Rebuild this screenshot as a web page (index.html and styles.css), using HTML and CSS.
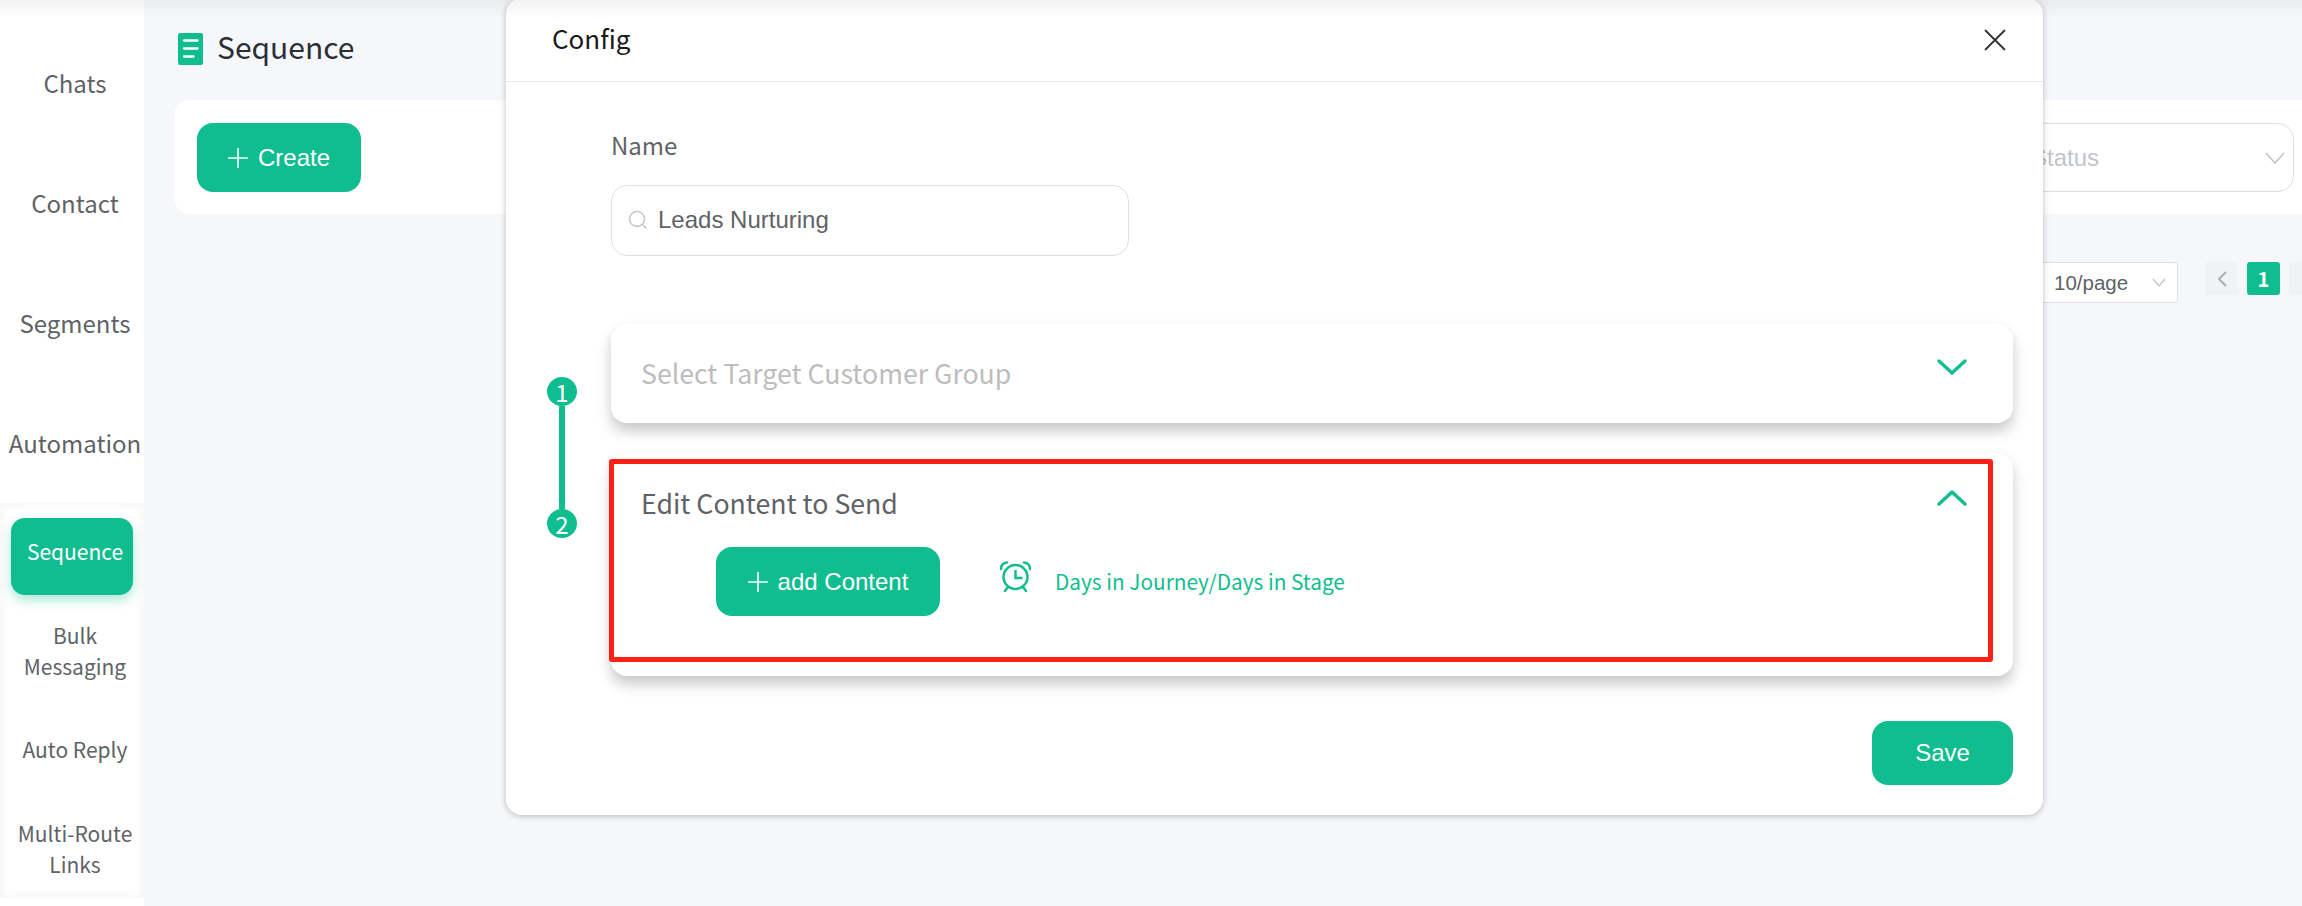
FILE: index.html
```html
<!DOCTYPE html>
<html>
<head>
	<meta charset="utf-8" />
	<title>Sequence</title>
	<link rel="stylesheet" href="styles.css">
</head>
<body>
	<div class="top_shade"></div>

	<div class="page">
		<div class="sidebar">
			<div class="nav_top">
				<div class="nav_big">Chats</div>
				<div class="nav_big">Contact</div>
				<div class="nav_big">Segments</div>
				<div class="nav_big">Automation</div>
			</div>
			<div class="nav_sub">
				<div class="nav_small active">Sequence</div>
				<div class="nav_small">Bulk Messaging</div>
				<div class="nav_small">Auto Reply</div>
				<div class="nav_small">Multi-Route Links</div>
			</div>
		</div>

		<div class="main">
			<div class="title_row">
				<svg class="title_icon" width="25" height="32" viewBox="0 0 25 32">
					<rect width="25" height="32" rx="2" fill="#10bd8f"/>
					<path d="M6 7.500h13.500M6 15.500h13.500M6 23.500h9.500" stroke="#fff" stroke-width="2.300" stroke-linecap="round" fill="none"/>
				</svg>
				<span class="title_text">Sequence</span>
			</div>

			<div class="filter_card">
				<button class="green_btn create_btn">
					<svg width="20" height="20" viewBox="0 0 20 20"><path d="M10 0v20M0 10h20" stroke="#fff" stroke-width="1.600" fill="none"/></svg>
					Create
				</button>
				<div class="status_select">
					<span>Status</span>
					<svg width="27" height="14" viewBox="0 0 27 14"><path d="M5 2l9 10 9-10" stroke="#c0c4cc" stroke-width="1.600" fill="none"/></svg>
				</div>
			</div>

			<div class="pager">
				<div class="page_size">
					<span>10/page</span>
					<svg width="14" height="9" viewBox="0 0 14 9"><path d="M1 1l6 7 6-7" stroke="#c0c4cc" stroke-width="1.300" fill="none"/></svg>
				</div>
				<div class="page_btn">
					<svg width="12" height="16" viewBox="0 0 12 16"><path d="M10 1L3 8l7 7" stroke="#a8abb2" stroke-width="1.800" fill="none"/></svg>
				</div>
				<div class="page_btn current">1</div>
				<div class="page_btn"></div>
			</div>
		</div>
	</div>

	<div class="modal">
		<div class="modal_head">
			<span class="modal_title">Config</span>
			<svg width="22" height="22" viewBox="0 0 22 22"><path d="M1 1l20 20M21 1L1 21" stroke="#303133" stroke-width="1.800" fill="none"/></svg>
		</div>
		<div class="modal_body">
			<div class="name_field">
				<div class="field_label">Name</div>
				<div class="name_input">
					<svg width="20" height="20" viewBox="0 0 20 20"><circle cx="9" cy="9" r="7.500" stroke="#c0c4cc" stroke-width="1.400" fill="none"/><path d="M14.500 14.500l4 4" stroke="#c0c4cc" stroke-width="1.400" fill="none"/></svg>
					<span>Leads Nurturing</span>
				</div>
			</div>

			<div class="steps">
				<div class="step_rail">
					<div class="step_dot">1</div>
					<div class="step_line"></div>
					<div class="step_dot">2</div>
				</div>
				<div class="step_cards">
					<div class="step_card closed">
						<div class="card_head">
							<span class="card_title muted">Select Target Customer Group</span>
							<svg width="30" height="16" viewBox="0 0 30 16"><path d="M2 2l13 12L28 2" stroke="#10bd8f" stroke-width="3.400" stroke-linecap="round" stroke-linejoin="round" fill="none"/></svg>
						</div>
					</div>
					<div class="step_card open">
						<div class="card_head">
							<span class="card_title">Edit Content to Send</span>
							<svg class="chevron_up" width="30" height="16" viewBox="0 0 30 16"><path d="M2 14L15 2l13 12" stroke="#10bd8f" stroke-width="3.400" stroke-linecap="round" stroke-linejoin="round" fill="none"/></svg>
						</div>
						<div class="content_row">
							<button class="green_btn add_btn">
								<svg width="20" height="20" viewBox="0 0 20 20"><path d="M10 0v20M0 10h20" stroke="#fff" stroke-width="1.600" fill="none"/></svg>
								add Content
							</button>
							<svg class="alarm" width="33" height="31" viewBox="0 0 33 31">
								<circle cx="16.500" cy="16" r="12" stroke="#10bd8f" stroke-width="2.500" fill="none"/>
								<path d="M16.500 9v8h7" stroke="#10bd8f" stroke-width="2.500" fill="none"/>
								<path d="M2 8C2 4 4 2 8 1.500M31 8c0-4-2-6-6-6.500M9 26l-3 4M24 26l3 4" stroke="#10bd8f" stroke-width="2.500" stroke-linecap="round" fill="none"/>
							</svg>
							<span class="days_text">Days in Journey/Days in Stage</span>
						</div>
						<div class="red_mark"></div>
					</div>
				</div>
			</div>

			<div class="modal_foot">
				<button class="green_btn save_btn">Save</button>
			</div>
		</div>
	</div>
</body>
</html>
```

FILE: styles.css
```css
*
{
	box-sizing:border-box;
}
html,body
{
	margin:0;
	height:100%;
	overflow:hidden;
}
body
{
	background-color:#f5f7fb;
	font-family:"Noto Sans CJK SC","Noto Sans",sans-serif;
	color:#606266;
}
.top_shade
{
	position:absolute;
	top:0;
	left:0;
	right:0;
	height:18px;
	z-index:5;
	background:linear-gradient(rgba(0,0,0,0.05),rgba(0,0,0,0));
}
.page
{
	display:flex;
	height:906px;
}

/* sidebar */
.sidebar
{
	width:144px;
	flex:none;
	background-color:#fff;
}
.nav_top
{
	padding-top:23px;
	height:503px;
}
.nav_big
{
	height:120px;
	width:150px;
	display:flex;
	align-items:center;
	justify-content:center;
	font-size:24px;
	line-height:1;
	color:#606266;
}
.nav_sub
{
	height:395px;
	padding-top:15px;
	display:flex;
	flex-direction:column;
	gap:22px;
	box-shadow:inset 0 0 12px rgba(0,0,0,0.06);
}
.nav_small
{
	height:77px;
	width:122px;
	margin-left:11px;
	padding:0 0 10px 6px;
	display:flex;
	align-items:center;
	justify-content:center;
	text-align:center;
	font-size:21px;
	line-height:31px;
	color:#606266;
}
.nav_small.active
{
	background-color:#10bd8f;
	color:#fff;
	border-radius:14px;
	box-shadow:0 5px 12px rgba(16,189,143,0.35);
}

/* main */
.main
{
	flex:1;
	min-width:0;
	padding-left:30px;
}
.title_row
{
	height:100px;
	padding:33px 0 0 4px;
	display:flex;
	align-items:flex-start;
	gap:14px;
}
.title_icon
{
	flex:none;
}
.title_text
{
	font-size:30px;
	line-height:27px;
	color:#2b2f36;
}
.filter_card
{
	height:114px;
	background-color:#fff;
	border-radius:16px 0 0 16px;
	padding:23px 8px 0 23px;
	display:flex;
	align-items:flex-start;
	justify-content:space-between;
}
.green_btn
{
	display:flex;
	align-items:center;
	justify-content:center;
	border:none;
	background-color:#10bd8f;
	color:#fff;
	font-family:"Liberation Sans",Arial,sans-serif;
	font-size:24px;
	border-radius:16px;
	padding:0;
}
.create_btn
{
	width:164px;
	height:69px;
	gap:10px;
}
.status_select
{
	width:310px;
	height:69px;
	border:1px solid #dcdfe6;
	border-radius:16px;
	padding:0 5px 0 46px;
	display:flex;
	align-items:center;
	justify-content:space-between;
	font-family:"Liberation Sans",Arial,sans-serif;
	font-size:24px;
	color:#c0c4cc;
}
.pager
{
	margin:48px -20px 0 0;
	display:flex;
	justify-content:flex-end;
	align-items:flex-start;
	gap:9px;
}
.page_size
{
	width:157px;
	height:41px;
	margin-right:18px;
	background-color:#fff;
	border:1px solid #dcdfe6;
	border-radius:4px;
	padding:0 11px 0 32px;
	display:flex;
	align-items:center;
	justify-content:space-between;
	font-family:"Liberation Sans",Arial,sans-serif;
	font-size:20.500px;
	color:#606266;
}
.page_btn
{
	width:33px;
	height:33px;
	background-color:#f0f2f5;
	border-radius:3px;
	display:flex;
	align-items:center;
	justify-content:center;
}
.page_btn.current
{
	background-color:#10bd8f;
	color:#fff;
	font-size:20px;
	font-weight:bold;
}

/* modal */
.modal
{
	position:absolute;
	top:-2px;
	left:506px;
	width:1537px;
	height:817px;
	z-index:2;
	background-color:#fff;
	border-radius:16px;
	box-shadow:0 1px 6px rgba(0,0,0,0.25);
}
.modal_head
{
	height:84px;
	border-bottom:1px solid #e4e7ed;
	padding:0 37px 3px 46px;
	display:flex;
	align-items:center;
	justify-content:space-between;
}
.modal_head svg
{
	margin-top:3px;
}
.modal_title
{
	font-size:26px;
	line-height:1;
	color:#1a1a1a;
}
.modal_body
{
	padding:0 30px 0 41px;
}
.name_field
{
	margin-left:64px;
	padding-top:46px;
}
.field_label
{
	font-size:24px;
	line-height:34px;
	color:#606266;
}
.name_input
{
	margin-top:23px;
	width:518px;
	height:71px;
	border:1px solid #dcdfe6;
	border-radius:16px;
	padding:0 0 2px 16px;
	display:flex;
	align-items:center;
	gap:10px;
	font-family:"Liberation Sans",Arial,sans-serif;
	font-size:24px;
	color:#606266;
}
.steps
{
	margin-top:68px;
	display:flex;
	align-items:flex-start;
	gap:34px;
}
.step_rail
{
	flex:none;
	width:30px;
	padding-top:53px;
	display:flex;
	flex-direction:column;
	align-items:center;
}
.step_dot
{
	width:30px;
	height:29px;
	border-radius:50%;
	background-color:#10bd8f;
	color:#fff;
	font-size:24px;
	line-height:29px;
	text-align:center;
}
.step_line
{
	width:6px;
	height:103px;
	background-color:#10bd8f;
}
.step_cards
{
	flex:1;
	display:flex;
	flex-direction:column;
	gap:30px;
}
.step_card
{
	position:relative;
	background-color:#fff;
	border-radius:16px;
	box-shadow:0 8px 14px rgba(0,0,0,0.22);
	padding:0 46px 0 30px;
}
.step_card.closed
{
	height:99px;
}
.step_card.open
{
	height:223px;
}
.card_head
{
	display:flex;
	justify-content:space-between;
	align-items:flex-start;
	padding-top:31px;
}
.closed .card_head
{
	padding-top:30px;
}
.card_head svg
{
	margin-top:5px;
}
.card_head .chevron_up
{
	margin-top:6px;
}
.card_title
{
	font-size:26.700px;
	line-height:38px;
	color:#606266;
}
.card_title.muted
{
	color:#bdbdbd;
}
.content_row
{
	margin:25px 0 0 75px;
	display:flex;
	align-items:flex-start;
}
.add_btn
{
	width:224px;
	height:69px;
	gap:10px;
}
.alarm
{
	margin:14px 0 0 59px;
}
.days_text
{
	margin:18px 0 0 23px;
	font-size:20.800px;
	line-height:32px;
	color:#10bd8f;
}
.red_mark
{
	position:absolute;
	top:6px;
	left:-2px;
	right:20px;
	bottom:14px;
	border:5px solid #ff2015;
	border-radius:3px;
}
.modal_foot
{
	margin-top:45px;
	display:flex;
	justify-content:flex-end;
}
.save_btn
{
	width:141px;
	height:64px;
}
```
